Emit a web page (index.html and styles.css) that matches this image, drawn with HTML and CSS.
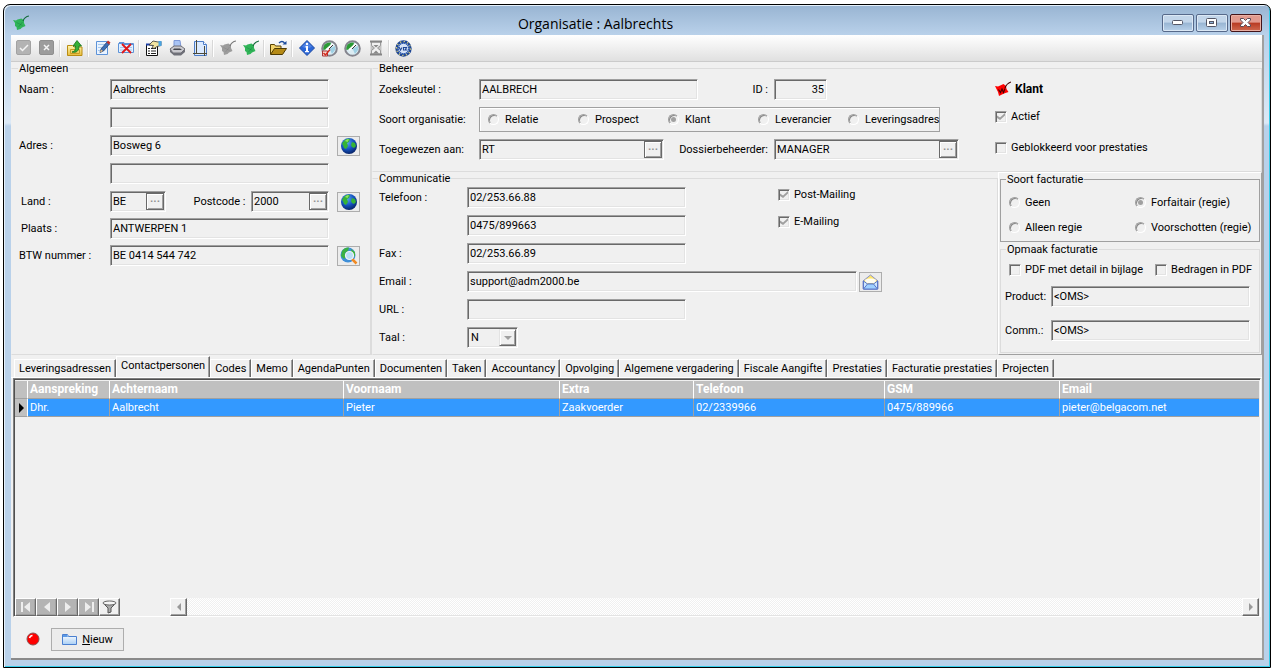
FILE: index.html
```html
<!DOCTYPE html>
<html lang="nl">
<head>
<meta charset="utf-8">
<title>Organisatie : Aalbrechts</title>
<link rel="stylesheet" href="styles.css">
</head>
<body>
<svg class="defs" aria-hidden="true">
  <defs>
    <radialGradient id="g-sea" cx=".4" cy=".3" r=".8"><stop offset="0" stop-color="#5aa6f0"/><stop offset=".5" stop-color="#1553c0"/><stop offset="1" stop-color="#04164e"/></radialGradient>
    <linearGradient id="g-folder" x2="0" y2="1"><stop offset="0" stop-color="#fff6b0"/><stop offset="1" stop-color="#e8bd3c"/></linearGradient>
    <linearGradient id="g-blue" x2="0" y2="1"><stop offset="0" stop-color="#fff"/><stop offset="1" stop-color="#a9cff5"/></linearGradient>
    <symbol id="leaf" viewBox="0 0 16 16"><path d="M0 5 3 5.500 4.500 4.500 8.500 3.500 11 5.500 11 8 12.500 11 9 12.500 7.500 14 4 15 3.500 12 2 11 2 8z"/><path d="M10 6c1-2.500 3-4.500 6-5" fill="none" stroke="currentColor" stroke-width="1.200"/><path d="M3.500 7.500l6 3M5.500 12l4-5" fill="none" stroke="currentColor" stroke-width=".8" opacity=".4"/></symbol>
    <symbol id="globe" viewBox="0 0 18 18"><circle cx="9" cy="9" r="8" fill="url(#g-sea)"/><path d="M3 5c2-3 5-4 7-3l-1 3-2 1 1 3-2 3-2-1-1-3-1-1zM12 5l3 1 1 3-2 2-2-1-1-2z" fill="#35b335"/><path d="M5 4c1-1.500 3-2 4-1.500L7.500 5z" fill="#8fe35c"/></symbol>
    <symbol id="gauge" viewBox="0 0 17 17"><circle cx="8.500" cy="8.500" r="7.300" fill="#dcecf3" stroke="#85858e" stroke-width="2"/><path d="M8.500 8.500 2.500 10A6 6 0 0 1 10 2.700z" fill="#2b9a35"/><path d="M8.500 8.500 14 6v4l-3 4z" fill="#9fd0e4"/><path d="M5 10l7-6" stroke="#fff" stroke-width="2"/><path d="M8 9l4-4" stroke="#333"/></symbol>
  </defs>
</svg>

<main class="window">
  <header class="titlebar">
    <svg class="title-icon leaf-green" width="16" height="16"><use href="#leaf"/></svg>
    <h1>Organisatie : Aalbrechts</h1>
    <div class="caption-buttons">
      <button type="button" aria-label="Minimaliseren"><svg width="12" height="6"><rect x=".5" y=".5" width="10" height="4" rx="1" fill="#fff" stroke="#535666"/></svg></button>
      <button type="button" aria-label="Maximaliseren"><svg width="12" height="10"><rect x=".5" y=".5" width="10" height="8" rx="1" fill="#fff" stroke="#535666"/><rect x="3.500" y="3.500" width="4" height="2" fill="#8fb4da" stroke="#535666"/></svg></button>
      <button type="button" class="close" aria-label="Sluiten"><svg width="12" height="10"><path d="M.5.5h3l2 2 2-2h3v1.500L8 4.500l2.500 2.500v1.500h-3l-2-2-2 2h-3V7L3 4.500.5 2z" fill="#fff" stroke="#5c4a56"/></svg></button>
    </div>
  </header>

  <div class="client">
    <div class="toolbar" role="toolbar" aria-label="Acties">
      <button type="button" aria-label="Bewaren"><svg width="16" height="16"><rect x=".5" y=".5" width="14" height="14" rx="1.500" fill="#b3b3b3" stroke="#a2a2a2"/><path d="M4 8l2.500 2.500L12 5" fill="none" stroke="#f4f4f4" stroke-width="1.500"/></svg></button>
      <button type="button" aria-label="Annuleren"><svg width="16" height="16"><rect x=".5" y=".5" width="14" height="14" rx="1.500" fill="#9c9c9c" stroke="#8f8f8f"/><path d="M5 5l5 5M10 5l-5 5" stroke="#f4f4f4" stroke-width="1.500"/></svg></button>
      <span class="sep"></span>
      <button type="button" aria-label="Omhoog"><svg width="16" height="16"><path d="M.5 15.500v-10h5l1.500 1.500h8v8.500z" fill="url(#g-folder)" stroke="#b98c14"/><path d="M3.500 9.500h9v4h-9z" fill="none" stroke="#c99c22"/><path d="M5 12c3-.5 3.500-2 3.500-6H6l4-5.500L14.500 6H12c0 5-2.500 7-7 6z" fill="#36b035" stroke="#14701a" stroke-width=".8"/></svg></button>
      <span class="sep"></span>
      <button type="button" aria-label="Bewerken"><svg width="16" height="16"><path d="M1.500 1.500h11v13h-11z" fill="#e9f3ff" stroke="#5d93d8"/><path d="M3 4.500h7M3 7.500h5M3 10.500h3" stroke="#a6c8ee"/><path d="M6 9l6-7 2.500 2-6 7L5 12.500z" fill="#3a6fb8" stroke="#27436f" stroke-width=".8"/><path d="M11.500 2.500l1.500-2 2.500 2L14 4.500z" fill="#c2302a"/><path d="M5 12.500l1-3 2 1.500z" fill="#f0c080"/></svg></button>
      <button type="button" aria-label="Verwijderen"><svg width="16" height="16"><path d="M.5 3.500h15v9h-15z" fill="#e4f1ff" stroke="#5d93d8"/><path d="M1 2.500h5v2h9" fill="none" stroke="#5d93d8"/><path d="M2 7.500h12M2 10h12" stroke="#a6c8ee"/><path d="M4 4l9 9M13 4l-9 9" stroke="#e01818" stroke-width="1.800"/></svg></button>
      <span class="sep"></span>
      <button type="button" aria-label="Eigenschappen"><svg width="17" height="16"><path d="M1.500 4.500h11v11h-11z" fill="#fff" stroke="#111"/><path d="M1 4.500h12" stroke="#1b3fa8" stroke-width="2"/><path d="M3 8.500h2M6 8.500h5M3 11h2M6 11h5M3 13.500h2M6 13.500h5" stroke="#222"/><path d="M4 5l4-4 5 1 3-.5v4l-4 1-3 2-2-1 1.500-2z" fill="#f2e4a0" stroke="#333" stroke-width=".8"/><path d="M13.500 1h3v5h-3z" fill="#4aa3e0"/></svg></button>
      <button type="button" aria-label="Afdrukken"><svg width="16" height="16"><path d="M5 .5h6l1 7H5z" fill="#a9c4f5" stroke="#7d98d8"/><path d="M1 9l4-3h7l4 3-4 4H4z" fill="#c9c9ce" stroke="#6e6e76"/><path d="M1 9v3l4 3.500h7l4-3.500V9l-4 4H4z" fill="#6f7078"/><path d="M5 8.500h6l2 1.500H4z" fill="#44464e"/></svg></button>
      <button type="button" aria-label="Pagina"><svg width="16" height="16"><path d="M2.500 1.500h9l3 3v11h-12z" fill="#dbeaff" stroke="#4d7dc8"/><path d="M11.500 1.500v3h3" fill="#fff" stroke="#4d7dc8"/><path d="M4.500 0v14M1 13.500h14M12.500 6v10" stroke="#4c4a3a" fill="none"/></svg></button>
      <span class="sep"></span>
      <button type="button" class="leaf-gray" aria-label="Niet actief"><svg width="16" height="16"><use href="#leaf"/></svg></button>
      <button type="button" class="leaf-green" aria-label="Actief"><svg width="16" height="16"><use href="#leaf"/></svg></button>
      <span class="sep"></span>
      <button type="button" aria-label="Openen"><svg width="17" height="16"><path d="M.5 14V4.500h4l1 1.500h5.500v3" fill="#f3d46b" stroke="#5a4303"/><path d="M.5 14.500l4-6h12l-4 6z" fill="#b58a16" stroke="#4e3a02"/><path d="M9 3c2-2 4-2 5.500 0" fill="none" stroke="#1b4b9c" stroke-width="1.300"/><path d="M12.500 4.500h4V1z" fill="#1b4b9c"/></svg></button>
      <span class="sep"></span>
      <button type="button" aria-label="Informatie"><svg width="16" height="16"><path d="M8 .5L15.500 8 8 15.500.5 8z" fill="#2b66d8" stroke="#1a489f"/><path d="M8 1.500L13 6.500C10 9 6 9 3 6.500z" fill="#6d9bf0" opacity=".5"/><path d="M6.500 6h2.500v6h-2V7.500h-.5zM6 11h4v1.300H6z" fill="#fff"/><circle cx="8" cy="4" r="1.200" fill="#fff"/></svg></button>
      <button type="button" aria-label="Historiek"><svg width="17" height="17"><use href="#gauge"/><path d="M1.500 11h5v5h-5z" fill="#f7dcd6" stroke="#a33"/><path d="M2.500 13l2 2L9 9.500" fill="none" stroke="#d42a1c" stroke-width="1.500"/></svg></button>
      <button type="button" aria-label="Meter"><svg width="17" height="17"><use href="#gauge"/></svg></button>
      <button type="button" aria-label="Wachten"><svg width="14" height="16"><path d="M1.500 1h11v14h-11z" fill="#c4c4c4"/><path d="M2.500 2v3c0 2 3 2 3 3s-3 1-3 3v3h9v-3c0-2-3-2-3-3s3-1 3-3V2z" fill="#f0f0f0" stroke="#999"/><path d="M4 13.500l3-3 3 3zM4.500 5h5L7 7.500z" fill="#888"/><path d="M1 1.500h12M1 14.500h12" stroke="#858585" stroke-width="2"/></svg></button>
      <span class="sep"></span>
      <button type="button" aria-label="BTW controle"><svg width="17" height="17"><circle cx="8.500" cy="8.500" r="7" fill="#f2f4e8" stroke="#1f4795" stroke-width="2.400"/><circle cx="8.500" cy="8.500" r="7" fill="none" stroke="#e8dc78" stroke-width="1.200" stroke-dasharray="1.200 2.460"/><circle cx="8.500" cy="8.500" r="5.200" fill="#d5e2f5" stroke="#2e5db3"/><path d="M4 7l1.500 3L7 7.500M8.500 10.500V7M8.500 7.500h3M12 7l-2 3h2.500" fill="none" stroke="#1f4795" stroke-width="1.100"/></svg></button>
    </div>

    <form class="details">
      <fieldset class="panel algemeen">
        <legend>Algemeen</legend>
        <div class="rows">
          <div class="row"><label class="lbl" for="naam">Naam :</label><input class="box w-std" id="naam" value="Aalbrechts" readonly></div>
          <div class="row"><span class="lbl"></span><input class="box w-std" aria-label="Naam 2" readonly></div>
          <div class="row"><label class="lbl" for="adres">Adres :</label><input class="box w-std" id="adres" value="Bosweg 6" readonly><button class="pic-btn" type="button" aria-label="Kaart adres"><svg width="18" height="18"><use href="#globe"/></svg></button></div>
          <div class="row"><span class="lbl"></span><input class="box w-std" aria-label="Adres 2" readonly></div>
        </div>
        <div class="rows tight">
          <div class="row"><label class="lbl indent" for="land">Land :</label>
            <div class="w-std split"><span class="box lookup w-land"><input id="land" value="BE" readonly><button type="button" aria-label="Kies land">···</button></span>
            <label for="postcode">Postcode :</label><span class="box lookup w-post"><input id="postcode" value="2000" readonly><button type="button" aria-label="Kies postcode">···</button></span></div>
            <button class="pic-btn" type="button" aria-label="Kaart plaats"><svg width="18" height="18"><use href="#globe"/></svg></button></div>
          <div class="row"><label class="lbl indent" for="plaats">Plaats :</label><input class="box w-std" id="plaats" value="ANTWERPEN 1" readonly></div>
          <div class="row"><label class="lbl" for="btw">BTW nummer :</label><input class="box w-std" id="btw" value="BE 0414 544 742" readonly><button class="pic-btn" type="button" aria-label="BTW opzoeken"><svg width="18" height="18"><circle cx="8" cy="8" r="7.500" fill="#3f8fd8"/><path d="M2 4c2-3 5-4 7-3.500L8 4 5 6l1 4-2 2-3-3zM11 2l4 3v4l-3 2z" fill="#3bb143"/><path d="M12 12l4.500 4.500" stroke="#f08a24" stroke-width="2.500"/><circle cx="9.500" cy="8.500" r="4" fill="#b9def5" stroke="#f4f4f4" stroke-width="1.200"/></svg></button></div>
        </div>
      </fieldset>

      <div class="right">
        <fieldset class="panel beheer">
          <legend>Beheer</legend>
          <div class="beheer-body">
            <div class="beheer-main">
              <div class="row"><label class="lbl" for="zoek">Zoeksleutel :</label><input class="box w-std" id="zoek" value="AALBRECH" readonly><label class="lbl2" for="idnr">ID :</label><input class="box w-id" id="idnr" value="35" readonly></div>
              <div class="row"><span class="lbl" id="soort-lbl">Soort organisatie:</span>
                <div class="radios" role="radiogroup" aria-labelledby="soort-lbl">
                  <label><input type="radio" name="soort">Relatie</label>
                  <label><input type="radio" name="soort">Prospect</label>
                  <label><input type="radio" name="soort" checked>Klant</label>
                  <label><input type="radio" name="soort">Leverancier</label>
                  <label><input type="radio" name="soort">Leveringsadres</label>
                </div></div>
              <div class="row"><label class="lbl" for="toegew">Toegewezen aan:</label><span class="box lookup w-user"><input id="toegew" value="RT" readonly><button type="button" aria-label="Kies gebruiker">···</button></span><label class="lbl2" for="dossier">Dossierbeheerder:</label><span class="box lookup w-user"><input id="dossier" value="MANAGER" readonly><button type="button" aria-label="Kies beheerder">···</button></span></div>
            </div>
            <div class="status">
              <strong><svg width="16" height="16"><path d="M0 5 3 5.500 8.500 3 11 5 11.500 8 13.500 11 9 12.500 4 15 3 11z" fill="#f00"/><path d="M10 7c1-3 3-5 6-6M3.500 8.500l2 3 1.500-3.500 1.500 3.500 1.500-4" fill="none" stroke="#400" stroke-width="1.100"/></svg>Klant</strong>
              <label class="check"><input type="checkbox" checked>Actief</label>
              <label class="check"><input type="checkbox">Geblokkeerd voor prestaties</label>
            </div>
          </div>
        </fieldset>

        <div class="lower">
          <fieldset class="panel communicatie">
            <legend>Communicatie</legend>
            <div class="comm-body">
              <div class="rows">
                <div class="row"><label class="lbl" for="tel">Telefoon :</label><input class="box w-std" id="tel" value="02/253.66.88" readonly></div>
                <div class="row"><span class="lbl"></span><input class="box w-std" aria-label="Telefoon 2" value="0475/899663" readonly></div>
                <div class="row"><label class="lbl" for="fax">Fax :</label><input class="box w-std" id="fax" value="02/253.66.89" readonly></div>
                <div class="row"><label class="lbl" for="email">Email :</label><input class="box w-mail" id="email" value="support@adm2000.be" readonly><button class="pic-btn mail-btn" type="button" aria-label="Mail versturen"><svg width="17" height="17"><path d="M1 8l7.500-6L16 8v8H1z" fill="#ffe66b" stroke="#8a92c8"/><path d="M3 7c2-2 9-2 11 0l-1 3H4z" fill="#fffdf0"/><path d="M1.500 8l4 3h6l4-3v8h-14z" fill="#cfe7ff" stroke="#5a78c8"/><path d="M1.500 16l4-5h6l4 5z" fill="#9fd0ff" stroke="#5a78c8"/></svg></button></div>
                <div class="row"><label class="lbl" for="url">URL :</label><input class="box w-std" id="url" readonly></div>
                <div class="row"><label class="lbl" for="taal">Taal :</label><span class="box combo"><select id="taal"><option>N</option><option>F</option></select><span class="arrow"></span></span></div>
              </div>
              <div class="mailing">
                <label class="check"><input type="checkbox" checked>Post-Mailing</label>
                <label class="check"><input type="checkbox" checked>E-Mailing</label>
              </div>
            </div>
          </fieldset>

          <div class="facturatie">
            <fieldset class="group etched">
              <legend>Soort facturatie</legend>
              <div class="fact-grid">
                <label><input type="radio" name="fact">Geen</label>
                <label><input type="radio" name="fact" checked>Forfaitair (regie)</label>
                <label><input type="radio" name="fact">Alleen regie</label>
                <label><input type="radio" name="fact">Voorschotten (regie)</label>
              </div>
            </fieldset>
            <fieldset class="group opmaak">
              <legend>Opmaak facturatie</legend>
              <div class="pdf">
                <label class="check"><input type="checkbox">PDF met detail in bijlage</label>
                <label class="check"><input type="checkbox">Bedragen in PDF</label>
              </div>
              <div class="row"><label class="lbl" for="product">Product:</label><input class="box" id="product" value="&lt;OMS&gt;" readonly></div>
              <div class="row"><label class="lbl" for="comm">Comm.:</label><input class="box" id="comm" value="&lt;OMS&gt;" readonly></div>
            </fieldset>
          </div>
        </div>
      </div>
    </form>

    <nav class="tabs" role="tablist">
      <button type="button" role="tab">Leveringsadressen</button>
      <button type="button" role="tab" class="active" aria-selected="true">Contactpersonen</button>
      <button type="button" role="tab">Codes</button>
      <button type="button" role="tab">Memo</button>
      <button type="button" role="tab">AgendaPunten</button>
      <button type="button" role="tab">Documenten</button>
      <button type="button" role="tab">Taken</button>
      <button type="button" role="tab">Accountancy</button>
      <button type="button" role="tab">Opvolging</button>
      <button type="button" role="tab">Algemene vergadering</button>
      <button type="button" role="tab">Fiscale Aangifte</button>
      <button type="button" role="tab">Prestaties</button>
      <button type="button" role="tab">Facturatie prestaties</button>
      <button type="button" role="tab">Projecten</button>
    </nav>

    <section class="page">
      <div class="grid">
        <table>
          <colgroup><col class="c-ind"><col class="c-aan"><col class="c-ach"><col class="c-voor"><col class="c-ext"><col class="c-tel"><col class="c-gsm"><col></colgroup>
          <thead><tr><th></th><th>Aanspreking</th><th>Achternaam</th><th>Voornaam</th><th>Extra</th><th>Telefoon</th><th>GSM</th><th>Email</th></tr></thead>
          <tbody><tr><td class="ind"><svg width="6" height="10"><path d="M0 0l5 5-5 5z"/></svg></td><td>Dhr.</td><td>Aalbrecht</td><td>Pieter</td><td>Zaakvoerder</td><td>02/2339966</td><td>0475/889966</td><td>pieter@belgacom.net</td></tr></tbody>
        </table>
        <div class="grid-foot">
          <div class="navigator">
            <button type="button" aria-label="Eerste"><svg width="14" height="12"><path d="M2 1h2v10H2zM11 1v10L5 6z" fill="#eee"/></svg></button>
            <button type="button" aria-label="Vorige"><svg width="14" height="12"><path d="M10 1v10L4 6z" fill="#eee"/></svg></button>
            <button type="button" aria-label="Volgende"><svg width="14" height="12"><path d="M4 1v10l6-5z" fill="#eee"/></svg></button>
            <button type="button" aria-label="Laatste"><svg width="14" height="12"><path d="M10 1h2v10h-2zM3 1v10l6-5z" fill="#eee"/></svg></button>
            <button type="button" class="filter" aria-label="Filter"><svg width="16" height="14"><path d="M1 3l5 5v5l3-1V8l5-5z" fill="#aaa" stroke="#555"/><ellipse cx="7.500" cy="3" rx="6.500" ry="2" fill="#f5f5f5" stroke="#666"/></svg></button>
          </div>
          <div class="hscroll">
            <button type="button" aria-label="Naar links"><svg width="6" height="8"><path d="M5 0v8L1 4z" fill="#999"/></svg></button>
            <span class="track"></span>
            <button type="button" aria-label="Naar rechts"><svg width="6" height="8"><path d="M1 0v8l4-4z" fill="#999"/></svg></button>
          </div>
        </div>
      </div>
      <footer class="actions">
        <svg width="14" height="14"><circle cx="7" cy="7" r="6" fill="#f00" stroke="#8a5050"/><path d="M3.500 6c.5-1.500 1.500-2.500 3-2.500" fill="none" stroke="#fff" stroke-width="1.500"/></svg>
        <button type="button" class="new-btn"><svg width="16" height="13"><path d="M.5 11.500v-10h5l1 2h8v8z" fill="url(#g-blue)" stroke="#4a7fd0"/><path d="M1 2h4l1 2H1z" fill="#5c9ae6"/></svg><span><u>N</u>ieuw</span></button>
      </footer>
    </section>
  </div>
</main>
</body>
</html>
```

FILE: styles.css
```css
* { box-sizing: border-box; }

body {
  margin: 0;
  padding: 4px 5px 2px 3px;
  height: 100vh;
  background: #fff;
  display: flex;
  font: 11px/13px Roboto, "Liberation Sans", sans-serif;
  color: #000;
}

button, input, select { font: inherit; color: inherit; margin: 0; }
button { padding: 0; }
label { white-space: nowrap; }
.defs { position: absolute; width: 0; height: 0; }

.window {
  flex: 1;
  min-width: 0;
  display: flex;
  flex-direction: column;
  padding: 0 6px 7px 7px;
  border: 1px solid #000;
  border-radius: 7px 7px 0 0;
  background: linear-gradient(#98b4d2, #b9d1ea 30px, #dce9f6 118px, #b9d1ea 121px);
  box-shadow: inset 1px 1px #e6f1fb, inset -1px -1px #35cdea;
}

/* title bar */
.titlebar { display: flex; align-items: center; height: 30px; padding: 5px 2px 0; }
.titlebar h1 {
  flex: 1;
  margin: 0;
  padding-top: 2px;
  text-align: center;
  font: 14px/20px "Open Sans", "Noto Sans", sans-serif;
}
.leaf-green { fill: #2fb457; color: #14693a; }
.leaf-gray { fill: #9c9c9c; color: #777; }
.caption-buttons { display: flex; gap: 2px; }
.caption-buttons button {
  flex: none;
  display: grid;
  place-items: center;
  width: 32px;
  height: 18px;
  border: 1px solid #56698a;
  border-radius: 2px;
  background: linear-gradient(#c3d6ea 45%, #98b5d3 50%, #b9d1ea);
  box-shadow: inset 0 0 0 1px #dbe8f5;
}
.caption-buttons .close {
  border-color: #43141a;
  background: linear-gradient(#e29a8e 45%, #b83a22 50%, #cf6a50);
  box-shadow: inset 0 0 0 1px #eab0a4;
}

.client {
  flex: 1;
  min-height: 0;
  display: flex;
  flex-direction: column;
  background: #f0f0f0;
  border-right: 2px solid #a0a0a0;
  border-bottom: 2px solid #8a8a8a;
}

/* toolbar */
.toolbar {
  display: flex;
  align-items: center;
  height: 27px;
  flex: none;
  padding: 0 4px;
  gap: 6px;
  background: linear-gradient(#fff, #e0e0e0);
  border-bottom: 1px solid #cbcbcb;
}
.toolbar button {
  display: grid;
  place-items: center;
  width: 17px;
  height: 20px;
  border: 0;
  background: none;
}
.toolbar .sep { width: 1px; height: 17px; margin: 0 -1px; background: #fff; box-shadow: -1px 0 #d8d8d8; }

/* panels */
fieldset { margin: 0; padding: 0; min-width: 0; border: 1px solid #dcdcdc; }
legend { margin-left: 6px; padding: 0 1px; }
.details { display: flex; flex: none; }
.panel { border-left-color: #f0f0f0; }
.algemeen { width: 361px; flex: none; border-right: 2px solid #dcdcdc; padding: 4px 7px 0; }
.right { flex: 1; min-width: 0; display: flex; flex-direction: column; }
.panel > legend { margin-left: -1px; }

.rows { display: flex; flex-direction: column; gap: 7px; }
.rows.tight { gap: 6px; margin-top: 7px; }
.row { display: flex; align-items: center; }
.lbl { flex: none; width: 91px; }
.lbl.indent { padding-left: 2px; }

.box {
  height: 21px;
  border: 1px solid;
  border-color: #a0a0a0 #fff #fff #a0a0a0;
  border-radius: 0;
  background: #f0f0f0;
  box-shadow: inset 1px 1px #696969, inset -1px -1px #e3e3e3;
  padding: 0 2px;
  outline: 0;
}
.w-std { width: 219px; flex: none; }
.w-land { width: 56px; }
.w-post { width: 78px; }
.w-id { width: 53px; text-align: right; }
.w-user { width: 185px; flex: none; }
.w-mail { width: 390px; }
.split { display: flex; align-items: center; justify-content: space-between; }
.split label { margin-left: 22px; }

.lookup { display: flex; padding: 1px 1px 1px 2px; }
.lookup input { flex: 1; width: 0; min-width: 0; padding: 0; border: 0; background: none; outline: 0; }
.lookup button {
  flex: none;
  width: 18px;
  border: 1px solid #696969;
  background: #f0f0f0;
  box-shadow: inset 1px 1px #fff, inset -1px -1px #a0a0a0;
  color: #909090;
  font-weight: 700;
  line-height: 13px;
}

.combo { display: flex; width: 51px; padding: 1px 1px 1px 2px; }
.combo select { appearance: none; flex: 1; min-width: 0; padding: 0 1px; border: 0; background: none; outline: 0; }
.arrow {
  display: grid;
  place-items: center;
  width: 17px;
  border: 1px solid;
  border-color: #e3e3e3 #696969 #696969 #e3e3e3;
  box-shadow: inset 1px 1px #fff, inset -1px -1px #a0a0a0;
  pointer-events: none;
}
.arrow::before { content: ""; border: 4px solid transparent; border-top-color: #a0a0a0; border-bottom-width: 0; }

.pic-btn {
  display: grid;
  place-items: center;
  width: 23px;
  height: 20px;
  margin-left: 8px;
  border: 1px solid #adadad;
  background: #ececec;
}
.mail-btn { margin-left: 2px; }

/* ticks and radios */
input[type=checkbox], input[type=radio] {
  appearance: none;
  flex: none;
  display: grid;
  place-items: center;
  width: 12px;
  height: 12px;
  border: 1px solid;
  border-color: #a0a0a0 #fff #fff #a0a0a0;
  background: #f0f0f0;
  box-shadow: inset 1px 1px #696969, inset -1px -1px #e3e3e3;
}
input[type=radio] { width: 11px; height: 11px; border-radius: 50%; box-shadow: inset 1px 1px #8a8a8a; }
input[type=radio]:checked::before { content: ""; width: 5px; height: 5px; border-radius: 50%; background: #a0a0a0; }
input[type=checkbox]:checked::before {
  content: "";
  width: 8px;
  height: 7px;
  background: #a0a0a0;
  clip-path: polygon(0 35%, 38% 65%, 100% 0, 100% 35%, 38% 100%, 0 70%);
}
.check { display: flex; align-items: center; gap: 4px; }

/* management */
.beheer { height: 110px; padding: 4px 0 0 6px; }
.beheer-body { display: flex; }
.beheer-main { flex: 1; min-width: 0; display: flex; flex-direction: column; gap: 7px; }
.beheer .lbl { width: 100px; }
.lbl2 { width: 110px; padding-right: 6px; text-align: right; }
.beheer-main .w-std { margin-right: -34px; }
.radios {
  display: grid;
  grid-template-columns: repeat(4, 90px) auto;
  align-items: center;
  height: 25px;
  padding: 0 0 0 8px;
  border: 1px solid #a0a0a0;
  box-shadow: inset 1px 1px #fff;
}
.radios label { display: flex; align-items: center; gap: 6px; }
.status { width: 266px; display: flex; flex-direction: column; align-items: flex-start; padding-top: 2px; }
.status strong { display: flex; align-items: center; gap: 4px; height: 16px; margin-bottom: 12px; font-size: 12px; }
.status .check { height: 15px; }
.status .check + .check { margin-top: 16px; }

/* communication and billing */
.lower { display: flex; }
.communicatie { flex: 1; padding: 2px 0 6px 6px; }
.communicatie .lbl { width: 88px; }
.comm-body { display: flex; }
.mailing { display: flex; flex-direction: column; gap: 14px; margin-left: -104px; padding-top: 1px; }
.facturatie {
  width: 264px;
  flex: none;
  display: flex;
  flex-direction: column;
  gap: 1px;
  padding: 0 1px 1px;
  border: 1px solid;
  border-color: #fff #a0a0a0 #a0a0a0 #fff;
}
.group { width: 100%; }
.group > legend { margin-left: 5px; }
.etched { border-color: #a0a0a0; }
.fact-grid { display: grid; grid-template-columns: 126px 1fr; row-gap: 12px; padding: 10px 0 7px 8px; }
.fact-grid label { display: flex; align-items: center; gap: 5px; }
.opmaak { flex: 1; padding: 0 9px 8px 4px; }
.opmaak > legend { margin-left: 1px; }
.opmaak .lbl { width: 46px; }
.opmaak .box { flex: 1; min-width: 0; }
.opmaak .row + .row { margin-top: 13px; }
.pdf { display: flex; justify-content: space-between; margin: 7px -2px 10px 4px; }

/* tabs */
.tabs { display: flex; align-items: flex-end; height: 22px; flex: none; padding-left: 3px; }
.tabs button {
  height: 18px;
  padding: 0 4px;
  border: 1px solid;
  border-color: #fff #696969 #f0f0f0 #fff;
  border-bottom: 0;
  background: #f0f0f0;
  box-shadow: inset -1px 0 #a0a0a0;
  white-space: nowrap;
}
.tabs .active { height: 21px; padding-bottom: 3px; }

.page { flex: 1; min-height: 0; display: flex; flex-direction: column; padding: 0 1px 0 2px; border-top: 1px solid #fff; }
.grid {
  flex: 1;
  min-height: 0;
  display: flex;
  flex-direction: column;
  border: 1px solid;
  border-color: #808080 #fff #fff #808080;
  box-shadow: inset 1px 1px #505050;
  padding: 2px 1px 0 1px;
}
table { width: 100%; table-layout: fixed; border-collapse: separate; border-spacing: 0; }
th, td { padding: 0 2px; text-align: left; white-space: nowrap; overflow: hidden; border-right: 1px solid #a0a0a0; border-bottom: 1px solid #a0a0a0; }
th { height: 18px; background: #c0c0c0; color: #fff; font-size: 12px; font-weight: 700; border-right-color: #fff; }
td { height: 18px; background: #39f; color: #fff; }
th:last-child, td:last-child { border-right: 0; }
.ind { background: #c0c0c0; padding: 0 4px; border-right-color: #fff; }
.ind svg { display: block; }
.c-ind { width: 13px; }
.c-aan { width: 82px; }
.c-ach { width: 234px; }
.c-voor { width: 216px; }
.c-ext { width: 134px; }
.c-tel { width: 191px; }
.c-gsm { width: 175px; }

.grid-foot { display: flex; gap: 50px; height: 18px; margin-top: auto; }
.navigator { display: flex; }
.navigator button, .hscroll button {
  display: grid;
  place-items: center;
  border: 1px solid;
  border-color: #fff #696969 #696969 #fff;
  background: #f0f0f0;
  box-shadow: inset -1px -1px #a0a0a0;
}
.navigator button { width: 21px; background: #b4b4b4; }
.navigator .filter { background: #f0f0f0; }
.hscroll { flex: 1; display: flex; }
.hscroll button { width: 17px; }
.track { flex: 1; background: repeating-conic-gradient(#fff 0 25%, #f0f0f0 0 50%) 0 0 / 2px 2px; border-bottom: 1px solid #e3e3e3; }

.actions { display: flex; align-items: center; gap: 11px; height: 41px; flex: none; padding: 3px 0 0 13px; }
.new-btn {
  display: flex;
  align-items: center;
  justify-content: center;
  gap: 4px;
  width: 73px;
  height: 23px;
  border: 1px solid #adadad;
  background: #ececec;
}
```
